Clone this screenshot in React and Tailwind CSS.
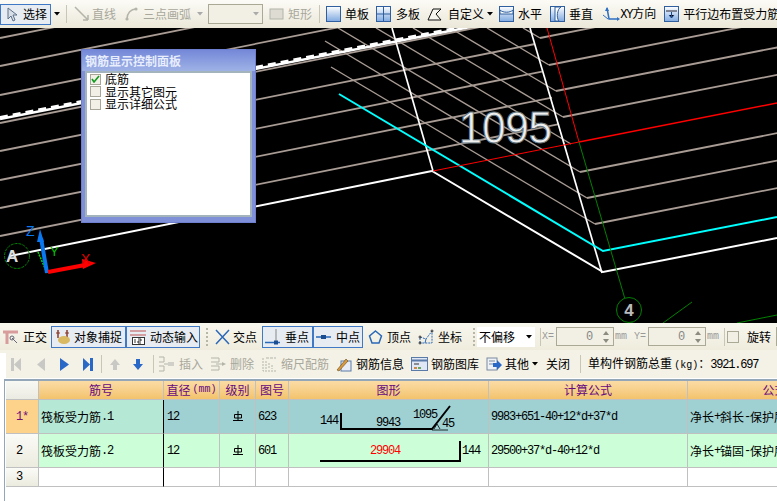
const mono = "[font-family:'Liberation_Mono','Noto_Sans_CJK_SC',monospace] text-[12px] tracking-[-1.2px]";
const small = "[font-family:'Liberation_Mono','Noto_Sans_CJK_SC',monospace] text-[10px]";

// bend point of each rebar, and where its diagonal leg starts
const bends = [
  [540, 38, 523, 28],
  [549, 65, 487, 28],
  [556, 91, 450, 28],
  [563, 117, 413, 28],
  [571, 144, 376, 28],
  [580, 172, 338, 28],
  [587, 198, 325, 41],
  [595, 224, 331, 67],
];
const leftEnds = [[38, 475], [66, 528], [95, 528], [123, 528], [151, 535], [180, 542], [208, 552], [236, 559]];

function Sep({ cls = "" }) {
  return <div className={`w-px h-[18px] bg-[#c8c6b4] shrink-0 ${cls}`} />;
}

function Drop({ cls = "", off }) {
  return (
    <svg width="6" height="4" className={`shrink-0 ${cls}`}>
      <path d="M0 0h6L3 3.5z" fill={off ? "#aaa" : "#000"} />
    </svg>
  );
}

function Grip({ cls = "" }) {
  return (
    <div className={`flex flex-col gap-[2px] shrink-0 ${cls}`}>
      {[0, 1, 2, 3, 4].map((i) => (
        <div key={i} className="w-[2px] h-[2px] bg-[#b8b6a6]" />
      ))}
    </div>
  );
}

function Tool({ icon, label, cls = "", off }) {
  return (
    <div className={`flex items-center shrink-0 whitespace-nowrap ${cls} ${off ? "text-[#a8a79c]" : "text-black"}`}>
      {icon}
      <span>{label}</span>
    </div>
  );
}

function Toggle({ icon, label, cls = "" }) {
  return (
    <div className={`flex items-center h-[22px] border border-[#3f78c4] bg-[#e6ecf2] shrink-0 ${cls}`}>
      {icon}
      <span>{label}</span>
    </div>
  );
}

function BlueBox({ children, w = 15 }) {
  return (
    <svg width={w} height="16" viewBox="0 0 15 16" className="shrink-0">
      <defs>
        <linearGradient id="bx" x1="0" y1="0" x2="0" y2="1">
          <stop offset="0" stopColor="#ffffff" />
          <stop offset="1" stopColor="#7fa9e0" />
        </linearGradient>
      </defs>
      <rect x="0.5" y="0.5" width="14" height="15" fill="url(#bx)" stroke="#2f5f9e" />
      {children}
    </svg>
  );
}

function S({ w = 15, h = 16, children }) {
  return (
    <svg width={w} height={h} viewBox={`0 0 ${w} ${h}`} fill="none" className="shrink-0">
      {children}
    </svg>
  );
}

function Spin() {
  return (
    <div className="flex flex-col gap-[4px] ml-[4px] mr-[4px]">
      <svg width="6" height="4"><path d="M3 0l3 4H0z" fill="#8b8b80" /></svg>
      <svg width="6" height="4"><path d="M3 4l3-4H0z" fill="#8b8b80" /></svg>
    </div>
  );
}

function NumBox({ cls = "" }) {
  return (
    <div className={`flex items-center justify-end h-[19px] border border-[#aaa996] bg-[#f2f0e4] shrink-0 text-[#888] ${mono} ${cls}`}>
      <span className="mr-[7px]">0</span>
      <Spin />
    </div>
  );
}

function Canvas() {
  return (
    <svg viewBox="0 28 777 295" className="block w-full h-full">
      {leftEnds.map(([y0, x]) => (
        <line key={y0} x1="0" y1={y0} x2={x} y2={y0 - 0.2 * x} stroke="#a89c94" strokeWidth="1.8" />
      ))}
      {bends.map(([x, y, sx, sy]) => (
        <line key={x} x1={sx} y1={sy} x2={x} y2={y} stroke="#a89c94" strokeWidth="1.4" />
      ))}
      {bends.filter(([x]) => x !== 571).map(([x, y]) => (
        <line key={x} x1={x} y1={y} x2="790" y2={y - 0.197 * (790 - x)} stroke="#a89c94" strokeWidth="1.8" />
      ))}

      <line x1="0" y1="119" x2="470" y2="27" stroke="#fff" strokeWidth="2.6" />
      <line x1="0" y1="117.5" x2="470" y2="25.5" stroke="#fff" strokeWidth="3" strokeDasharray="8 5" />
      <line x1="10" y1="256" x2="432" y2="171" stroke="#fff" strokeWidth="2" />
      <polyline points="432,171 603,272 777,238" stroke="#fff" strokeWidth="2" fill="none" />
      <line x1="392" y1="28" x2="433" y2="171" stroke="#fff" strokeWidth="1.7" />
      <line x1="530" y1="28" x2="602" y2="273" stroke="#fff" strokeWidth="1.7" />

      <polyline points="339,94 603,251 777,217" stroke="#00ffff" strokeWidth="2" fill="none" />
      <line x1="547" y1="28" x2="579" y2="142" stroke="#ff0000" strokeWidth="1" />
      <line x1="433" y1="171" x2="579" y2="142" stroke="#ff0000" strokeWidth="1" />
      <line x1="579" y1="142" x2="777" y2="103" stroke="#ff0000" strokeWidth="1.5" />

      <line x1="579" y1="142" x2="632" y2="323" stroke="#008000" strokeWidth="1" />
      <line x1="663" y1="323" x2="692" y2="302" stroke="#008000" strokeWidth="1" />
      <line x1="737" y1="323" x2="777" y2="315" stroke="#008000" strokeWidth="1" />
      <circle cx="629" cy="310" r="12.5" stroke="#008000" fill="#000" />
      <text x="629" y="316" textAnchor="middle" fontSize="17" fontWeight="700" fill="#bbb" fontFamily="Liberation Sans">4</text>

      <text
        x="459"
        y="143"
        textLength="93"
        lengthAdjust="spacingAndGlyphs"
        fontSize="45"
        fill="#efefef"
        stroke="#64747c"
        strokeWidth="1"
        fontFamily="Liberation Sans"
      >
        1095
      </text>

      <circle cx="17" cy="256" r="12.5" stroke="#008000" strokeDasharray="3 1" fill="none" />
      <text x="6" y="262" fontSize="17" fontWeight="700" fill="#ddd" fontFamily="Liberation Sans">A</text>
      <line x1="47" y1="273" x2="38" y2="252" stroke="#00e000" strokeWidth="1.5" strokeDasharray="2 1" />
      <line x1="47" y1="273" x2="41" y2="238" stroke="#0a78f0" strokeWidth="4" />
      <path d="M40 229l4 13h-7z" fill="#0a78f0" />
      <line x1="48" y1="272" x2="85" y2="265" stroke="#ff0000" strokeWidth="4" />
      <path d="M96 263l-13 6-1-10z" fill="#ff0000" />
      <text x="26" y="236" fontSize="14" fill="#0a78f0" fontFamily="Liberation Sans">Z</text>
      <text x="50" y="256" fontSize="13" fill="#00c000" fontFamily="Liberation Sans">Y</text>
      <text x="81" y="264" fontSize="14" fill="#e00000" fontFamily="Liberation Sans">X</text>
    </svg>
  );
}

function Check({ on, label }) {
  return (
    <div className="flex items-center h-[12.5px]">
      <div className="w-[11px] h-[11px] border border-[#a8a698] bg-[#f1efe6] flex items-center justify-center shrink-0">
        {on && (
          <svg width="9" height="8">
            <path d="M1 4l2 3 5-6" stroke="#109a20" strokeWidth="1.6" fill="none" />
          </svg>
        )}
      </div>
      <span className="ml-[4px] whitespace-nowrap">{label}</span>
    </div>
  );
}

function Panel() {
  return (
    <div className="absolute left-[81px] top-[21px] w-[175px] h-[174px] border border-[#6e7fd0] bg-[#7f8fd8] flex flex-col">
      <div className="h-[21px] pl-[3px] flex items-center bg-linear-to-b from-[#7488d8] to-[#9fb2e6] text-[#e8eefc] font-bold whitespace-nowrap">
        钢筋显示控制面板
      </div>
      <div className="mx-[3px] mb-[5px] flex-1 border-2 border-[#a4b4bc] bg-white px-[3px] text-black">
        <Check on label="底筋" />
        <Check label="显示其它图元" />
        <Check label="显示详细公式" />
      </div>
    </div>
  );
}

function Grade() {
  return (
    <svg width="10" height="11" viewBox="0 0 10 11" fill="none" stroke="#000">
      <path d="M5 0v9M1.5 3.5h7v3.5h-7zM0 9.5h10" />
    </svg>
  );
}

function Cell({ cls = "", children }) {
  return (
    <div className={`flex items-center whitespace-nowrap overflow-hidden border-r border-b border-[#c0c0c0] ${cls}`}>
      {children}
    </div>
  );
}

function Head({ children, cls = "" }) {
  return (
    <Cell cls={`justify-center bg-linear-to-b from-[#fbdca6] to-[#f3c36c] text-[#660a80] ${cls}`}>
      {children}
    </Cell>
  );
}

function Shape1() {
  return (
    <svg width="199" height="33" viewBox="289 400 199 33" className="block">
      <g fontFamily="Liberation Mono" fontSize="12" letterSpacing="-1.2" fill="#000">
        <text x="320" y="424">144</text>
        <text x="376" y="426">9943</text>
        <text x="413" y="418">1095</text>
        <text x="442" y="427">45</text>
      </g>
      <path d="M341 413v16h91l18-23" stroke="#000" strokeWidth="2" fill="none" />
      <path d="M432 430h16M434 429l3-5 3 5" stroke="#000" strokeWidth="0.8" fill="none" />
    </svg>
  );
}

function Shape2() {
  return (
    <svg width="199" height="33" viewBox="289 434 199 33" className="block">
      <text x="370" y="454" fontFamily="Liberation Mono" fontSize="12" letterSpacing="-1.2" fill="#ff0000">29904</text>
      <text x="462" y="454" fontFamily="Liberation Mono" fontSize="12" letterSpacing="-1.2" fill="#000">144</text>
      <path d="M320 461h140v-20" stroke="#000" strokeWidth="2" fill="none" />
    </svg>
  );
}

export default function App() {
  return (
    <div className="w-[777px] h-[501px] overflow-hidden bg-white text-[12px] leading-none text-black [font-family:'Noto_Sans_CJK_SC',sans-serif]">
      {/* top toolbar */}
      <div className="h-[28px] flex items-center bg-linear-to-b from-[#fcfbf6] to-[#ebe8d9]">
        <div className="flex items-center w-[51px] h-[21px] border border-[#3f78c4] bg-[#e6ecf2] shrink-0">
          <svg width="12" height="15" className="ml-[5px] mr-[5px] shrink-0">
            <path d="M2 1v11l3-3 2 5 2-1-2-5h4z" fill="#d8dee8" stroke="#5c7088" />
          </svg>
          <span>选择</span>
        </div>
        <Drop cls="ml-[3px]" />
        <Sep cls="ml-[6px]" />
        <Tool off cls="ml-[7px] gap-[3px]" label="直线" icon={<S><path d="M1 1l13 13M14 14V9M14 14H9" stroke="#b4b4aa" strokeWidth="1.5" /></S>} />
        <Tool off cls="ml-[8px] gap-[4px]" label="三点画弧" icon={<S><path d="M3 13C3 7 7 3 12 3" stroke="#b4b4aa" strokeWidth="1.5" /><circle cx="3" cy="13" r="1.6" fill="#b4b4aa" /><circle cx="12" cy="3" r="1.6" fill="#b4b4aa" /></S>} />
        <Drop off cls="ml-[6px]" />
        <div className="ml-[5px] w-[55px] h-[20px] border border-[#aaa996] bg-[#f2f0e4] flex items-center justify-end pr-[3px] shrink-0">
          <Drop off />
        </div>
        <Tool off cls="ml-[6px] gap-[4px]" label="矩形" icon={<S><rect x="1" y="3" width="13" height="10" fill="#dedcd2" stroke="#b4b4aa" /></S>} />
        <Sep cls="ml-[7px]" />
        <Tool cls="ml-[6px] gap-[4px]" label="单板" icon={<BlueBox />} />
        <Tool cls="ml-[7px] gap-[5px]" label="多板" icon={<BlueBox><path d="M7.5 0v16M0 8h15" stroke="#2f5f9e" /></BlueBox>} />
        <Tool cls="ml-[7px] gap-[6px]" label="自定义" icon={<S><path d="M1 14L6 3h8L9 8l5 6z" stroke="#111" fill="#f7f6ee" /></S>} />
        <Drop cls="ml-[3px]" />
        <Tool cls="ml-[6px] gap-[4px]" label="水平" icon={<BlueBox><path d="M1 4c3 3 10 3 13 0v4H1z" fill="#fff" stroke="#2f5f9e" /></BlueBox>} />
        <Tool cls="ml-[8px] gap-[4px]" label="垂直" icon={<BlueBox><path d="M11 1C7 3 6 12 9 15H5V1z" fill="#fff" stroke="#2f5f9e" /></BlueBox>} />
        <Tool
          cls="ml-[9px]"
          label={<><span className={mono}>XY</span>方向</>}
          icon={<svg width="18" height="18" fill="none" className="shrink-0"><path d="M5 3l2 11h8" stroke="#2f6fc4" strokeWidth="1.5" /><path d="M5 2l-2 4h4zM15 12v4l3-2z" fill="#2f6fc4" /><path d="M1 10l5 4" stroke="#2f6fc4" /></svg>}
        />
        <Tool cls="ml-[8px] gap-[4px]" label="平行边布置受力筋" icon={<BlueBox><path d="M2 5h11" stroke="#223" /><path d="M7.5 6v6M5 9l2.5 3L10 9" stroke="#1c4c90" /></BlueBox>} />
      </div>

      <div className="relative h-[295px] bg-black overflow-hidden">
        <Canvas />
        <Panel />
      </div>

      {/* snap toolbar */}
      <div className="h-[27px] flex items-center bg-linear-to-b from-[#f8f7ee] to-[#efecdd] pl-[3px]">
        <Tool cls="gap-[5px]" label="正交" icon={<S><path d="M0 3h15M4 3v12" stroke="#d89c9c" strokeWidth="3" /><path d="M9 9l5 5" stroke="#667" /><circle cx="9" cy="9" r="2" stroke="#667" /></S>} />
        <Toggle cls="ml-[4px] w-[75px] pl-[3px] gap-[4px]" label="对象捕捉" icon={<S><path d="M3 1v8M12 1v8" stroke="#8a3a2a" strokeWidth="1.5" /><path d="M1 4h4M10 4h4" stroke="#8a3a2a" /><ellipse cx="9" cy="11" rx="6" ry="4" fill="#d8b860" /></S>} />
        <Toggle cls="w-[74px] pl-[3px] gap-[4px]" label="动态输入" icon={<svg width="16" height="16" fill="none" className="shrink-0"><path d="M0 2h16M0 6h16" stroke="#c05050" /><rect x="2.5" y="8.5" width="12" height="7" fill="#fff" stroke="#333" /><path d="M5 10v4M8 10h3v2H8v2h3" stroke="#000" strokeWidth="0.8" /></svg>} />
        <Grip cls="ml-[6px]" />
        <Tool cls="ml-[7px] gap-[3px]" label="交点" icon={<S><path d="M1 1l13 14M14 1L1 15" stroke="#2a68b8" strokeWidth="1.5" /></S>} />
        <Toggle cls="ml-[5px] w-[51px] pl-[2px] gap-[5px]" label="垂点" icon={<S><path d="M0 13.5h15" stroke="#2a68b8" strokeWidth="1.5" /><path d="M11 0v13" stroke="#888" /><rect x="9" y="11.5" width="4" height="4" fill="#1c4c90" /></S>} />
        <Toggle cls="w-[50px] pl-[2px] gap-[5px]" label="中点" icon={<S><path d="M0 8h15" stroke="#2a68b8" strokeWidth="1.5" /><rect x="5" y="6" width="5" height="4" fill="#1c4c90" /></S>} />
        <Tool cls="ml-[5px] gap-[4px]" label="顶点" icon={<S><path d="M7.5 2l6 5-2.5 7H4L1.5 7z" stroke="#2a68b8" strokeWidth="1.5" /></S>} />
        <Tool cls="ml-[7px] gap-[4px]" label="坐标" icon={<svg width="16" height="16" fill="none" className="shrink-0"><path d="M2 14V8l6 2 6-8v12z" stroke="#2a68b8" strokeDasharray="2 1" /><path d="M8 10l-1 4" stroke="#2a68b8" /><circle cx="2" cy="8" r="1" stroke="#333" /><circle cx="14" cy="2" r="1" stroke="#333" /><circle cx="2" cy="14" r="1" stroke="#333" /></svg>} />
        <Grip cls="ml-[11px]" />
        <div className="ml-[2px] w-[58px] h-[20px] bg-white flex items-center pl-[2px] pr-[3px] justify-between shrink-0">
          <span>不偏移</span>
          <Drop />
        </div>
        <Sep cls="ml-[5px]" />
        <span className={`ml-[1px] w-[12px] text-[#999] shrink-0 ${small}`}>X=</span>
        <NumBox cls="ml-[2px] w-[58px]" />
        <span className={`ml-[1px] w-[12px] text-[#999] shrink-0 ${small}`}>mm</span>
        <span className={`ml-[7px] w-[12px] text-[#999] shrink-0 ${small}`}>Y=</span>
        <NumBox cls="ml-[2px] w-[58px]" />
        <span className={`ml-[1px] w-[12px] text-[#999] shrink-0 ${small}`}>mm</span>
        <Sep cls="ml-[5px]" />
        <div className="ml-[2px] w-[12px] h-[12px] border border-[#aaa996] bg-[#f2f0e4] shrink-0" />
        <span className="ml-[8px] shrink-0">旋转</span>
        <div className="ml-[5px] w-[30px] h-[19px] border border-[#aaa996] bg-[#f2f0e4] shrink-0" />
      </div>

      {/* list toolbar */}
      <div className="h-[28px] flex bg-[#f4f2e6]">
        <div className="w-[6px] mt-[3px] bg-white shrink-0" />
        <div className="flex-1 flex items-center">
          <div className="ml-[5px]"><S w={10} h={13}><path d="M0 0h3v13H0zM10 0v13L3 6.5z" fill="#c8c8c4" /></S></div>
          <div className="ml-[16px]"><S w={8} h={13}><path d="M8 0v13L0 6.5z" fill="#c8c8c4" /></S></div>
          <div className="ml-[15px]"><S w={9} h={13}><path d="M0 0v13l9-6.5z" fill="#2a68c8" /></S></div>
          <div className="ml-[14px]"><S w={10} h={13}><path d="M0 0v13l7-6.5zM7 0h3v13H7z" fill="#2a68c8" /></S></div>
          <Sep cls="ml-[8px]" />
          <div className="ml-[8px]"><S w={10} h={11}><path d="M5 0l5 6H7v5H3V6H0z" fill="#c8c8c4" /></S></div>
          <div className="ml-[13px]"><S w={10} h={11}><path d="M5 11l5-6H7V0H3v5H0z" fill="#2a68c8" /></S></div>
          <Sep cls="ml-[10px]" />
          <Tool off cls="ml-[4px] gap-[4px]" label="插入" icon={<S w={17}><path d="M1 1h5v5H1M1 10h5v5H1M6 8h5" stroke="#b4b4aa" /><rect x="10" y="6" width="6" height="4" fill="#d0d0c8" /></S>} />
          <Tool off cls="ml-[7px] gap-[4px]" label="删除" icon={<S w={16}><path d="M1 2h8v4H1M1 10h8v4H1M6 8h7" stroke="#b4b4aa" /><path d="M16 8l-4-2v4z" fill="#b4b4aa" /></S>} />
          <Tool off cls="ml-[8px] gap-[4px]" label="缩尺配筋" icon={<S><path d="M1 2v13h13M4 5v8M7 7v6M10 9v4" stroke="#b4b4aa" strokeDasharray="2 1" /><path d="M4 2h10" stroke="#b4b4aa" strokeDasharray="3 1" /></S>} />
          <Tool cls="ml-[7px] gap-[4px]" label="钢筋信息" icon={<S w={16}><rect x="5" y="5" width="10" height="10" fill="#e8ecf4" stroke="#5a7aa8" /><path d="M1 14L10 3l2 2-9 10z" fill="#d89a3a" stroke="#6a4a20" strokeWidth="0.6" /></S>} />
          <Tool cls="ml-[7px] gap-[3px]" label="钢筋图库" icon={<S w={17}><rect x="0.5" y="1.5" width="16" height="13" fill="#dfe8f4" stroke="#5a7aa8" /><path d="M1 4.5h15" stroke="#5a7aa8" strokeWidth="2" /><path d="M3 8h5" stroke="#333" /><path d="M3 12h3" stroke="#c84" strokeWidth="2" /><path d="M7 12h3" stroke="#6a6" strokeWidth="2" /></S>} />
          <Tool cls="ml-[7px] gap-[3px]" label="其他" icon={<S w={16}><rect x="1" y="2" width="10" height="12" fill="#eef1f6" stroke="#7a8aa0" /><path d="M3 5h6M3 8h4" stroke="#7a8aa0" /><path d="M7 7h4V4l5 5-5 5v-3H7z" fill="#2a68c8" /></S>} />
          <Drop cls="ml-[3px]" />
          <span className="ml-[8px] shrink-0">关闭</span>
          <Sep cls="ml-[10px]" />
          <span className="ml-[7px] whitespace-nowrap">
            单构件钢筋总重<span className={`${small} ml-[2px]`}>(kg)</span>：<span className={mono}>3921.697</span>
          </span>
        </div>
      </div>

      {/* rebar table */}
      <div className="mt-px ml-[4px] h-[122px] border-t-2 border-l border-[#93a7b8] pl-px overflow-hidden">
        <div className="grid w-[880px] grid-cols-[33px_125px_56px_36px_33px_200px_199px_198px] grid-rows-[19px_34px_34px_19px]">
          <Cell cls="bg-linear-to-b from-[#f8f8f4] to-[#ecebe2]" />
          <Head>筋号</Head>
          <Head>直径<span className={`${small} ml-[2px]`}>(mm)</span></Head>
          <Head>级别</Head>
          <Head>图号</Head>
          <Head>图形</Head>
          <Head>计算公式</Head>
          <Head>公式描述</Head>

          <Cell cls={`bg-[#fdd28a] pl-[10px] text-[#70107a] ${mono}`}>1*</Cell>
          <Cell cls="bg-[#b5e8d5] pl-[2px] border-r-black">筏板受力筋<span className={mono}>.1</span></Cell>
          <Cell cls={`bg-[#9fd0d2] pl-[3px] ${mono}`}>12</Cell>
          <Cell cls="bg-[#9fd0d2] justify-center"><Grade /></Cell>
          <Cell cls={`bg-[#9fd0d2] pl-[2px] ${mono}`}>623</Cell>
          <Cell cls="bg-[#9fd0d2]"><Shape1 /></Cell>
          <Cell cls={`bg-[#9fd0d2] pl-[2px] ${mono}`}>9983+651-40+12*d+37*d</Cell>
          <Cell cls="bg-[#9fd0d2] pl-[2px]">净长<span className={mono}>+</span>斜长<span className={mono}>-</span>保护层</Cell>

          <Cell cls={`bg-linear-to-b from-[#fbfbf7] to-[#ecebdf] pl-[10px] ${mono}`}>2</Cell>
          <Cell cls="bg-[#ccffd8] pl-[2px] border-r-black">筏板受力筋<span className={mono}>.2</span></Cell>
          <Cell cls={`bg-[#ccffd8] pl-[3px] ${mono}`}>12</Cell>
          <Cell cls="bg-[#ccffd8] justify-center"><Grade /></Cell>
          <Cell cls={`bg-[#ccffd8] pl-[2px] ${mono}`}>601</Cell>
          <Cell cls="bg-[#ccffd8]"><Shape2 /></Cell>
          <Cell cls={`bg-[#ccffd8] pl-[2px] ${mono}`}>29500+37*d-40+12*d</Cell>
          <Cell cls="bg-[#ccffd8] pl-[2px]">净长<span className={mono}>+</span>锚固<span className={mono}>-</span>保护层</Cell>

          <Cell cls={`bg-linear-to-b from-[#fbfbf7] to-[#ecebdf] pl-[10px] ${mono}`}>3</Cell>
          <Cell cls="border-r-black" />
          <Cell />
          <Cell />
          <Cell />
          <Cell />
          <Cell />
          <Cell />
        </div>
      </div>
    </div>
  );
}
